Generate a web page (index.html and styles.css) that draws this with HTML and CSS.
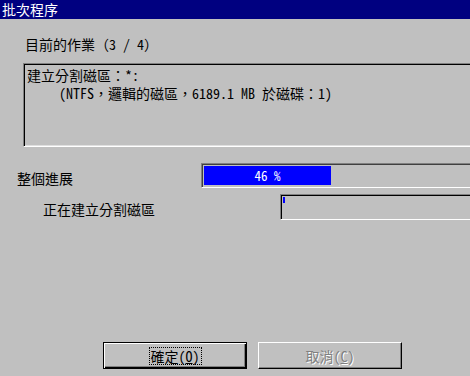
FILE: index.html
```html
<!DOCTYPE html>
<html>
<head>
  <meta charset="utf-8">
  <title>批次程序</title>
  <link rel="stylesheet" href="styles.css">
</head>
<body>
  <div class="titlebar">批次程序</div>

  <div class="dialog">
    <div class="task-label">目前的作業（3 / 4）</div>

    <div class="task-box">
      <div class="task-line">建立分割磁區：*:</div>
      <div class="task-line indent">(NTFS，邏輯的磁區，6189.1 MB 於磁碟：1)</div>
    </div>

    <div class="progress-row overall">
      <span class="progress-label">整個進展</span>
      <div class="progress-bar">
        <div class="progress-fill" style="width: 127px;"><span>46 %</span></div>
      </div>
    </div>

    <div class="progress-row step">
      <span class="progress-label">正在建立分割磁區</span>
      <div class="progress-bar">
        <div class="progress-fill tiny" style="width: 2px;"></div>
      </div>
    </div>

    <div class="buttons">
      <button class="btn default"><span class="focus">確定(<u>O</u>)</span></button>
      <button class="btn" disabled>取消(<u>C</u>)</button>
    </div>
  </div>
</body>
</html>
```

FILE: styles.css
```css
:root {
  --face: #c0c0c0;
  --shadow: #808080;
  --dark: #000000;
  --light: #ffffff;
  --title: #000080;
  --fill: #0000ff;
}

* {
  margin: 0;
  padding: 0;
  box-sizing: border-box;
}

body {
  width: 470px;
  height: 376px;
  overflow: hidden;
  background: var(--face);
  color: #000;
  font-family: "Noto Sans Mono CJK TC", "Noto Sans CJK TC", monospace;
  font-size: 14px;
  line-height: 16px;
}

.titlebar {
  height: 19px;
  line-height: 19px;
  background: var(--title);
  color: var(--light);
  padding-left: 2px;
}

.task-label {
  margin: 17px 0 0 25px;
}

.task-box {
  margin: 11px 0 0 23px;
  width: 447px;
  height: 84px;
  padding: 2px 0 0 3px;
  border: 1px solid;
  border-right: 0;
  border-color: var(--shadow) var(--light) var(--light) var(--shadow);
  box-shadow: inset 1px 1px var(--dark), inset 0 -1px #dfdfdf;
  line-height: 18px;
}

.task-line.indent {
  padding-left: 32px;
}

.progress-row {
  display: flex;
  align-items: center;
}

.progress-label {
  flex-shrink: 0;
}

.progress-row.overall {
  margin-top: 16px;
  padding-left: 17px;
}

.progress-row.overall .progress-label {
  width: 184px;
  padding-top: 5px;
}

.progress-row.step {
  margin-top: 6px;
  padding-left: 43px;
}

.progress-row.step .progress-label {
  width: 237px;
  padding-top: 3px;
}

.progress-bar {
  flex: 1;
  height: 25px;
  padding: 2px 0 2px 2px;
  border: 1px solid;
  border-right: 0;
  border-color: var(--shadow) var(--light) var(--light) var(--shadow);
  box-shadow: inset 1px 1px #404040;
}

.step .progress-bar {
  height: 26px;
  box-shadow: inset 1px 1px var(--dark);
}

.progress-fill {
  height: 100%;
  background: var(--fill);
  color: var(--light);
  display: flex;
  align-items: center;
  justify-content: center;
  font-size: 13px;
}

.progress-fill.tiny {
  height: 6px;
}

.buttons {
  display: flex;
  gap: 11px;
  margin: 122px 0 0 103px;
}

.btn {
  width: 144px;
  height: 27px;
  background: var(--face);
  font: inherit;
  color: #000;
  border: 1px solid;
  border-color: var(--light) var(--dark) var(--dark) var(--light);
  box-shadow: inset -1px -1px var(--shadow);
  display: flex;
  align-items: center;
  justify-content: center;
}

.btn.default {
  border: 1px solid var(--dark);
  box-shadow: inset 1px 1px var(--light), inset -1px -1px var(--dark), inset -2px -2px var(--shadow);
}

.btn .focus {
  outline: 1px dotted var(--dark);
  outline-offset: 0;
  padding: 0 1px;
}

.btn:disabled {
  color: var(--shadow);
  text-shadow: 1px 1px var(--light);
}
```
